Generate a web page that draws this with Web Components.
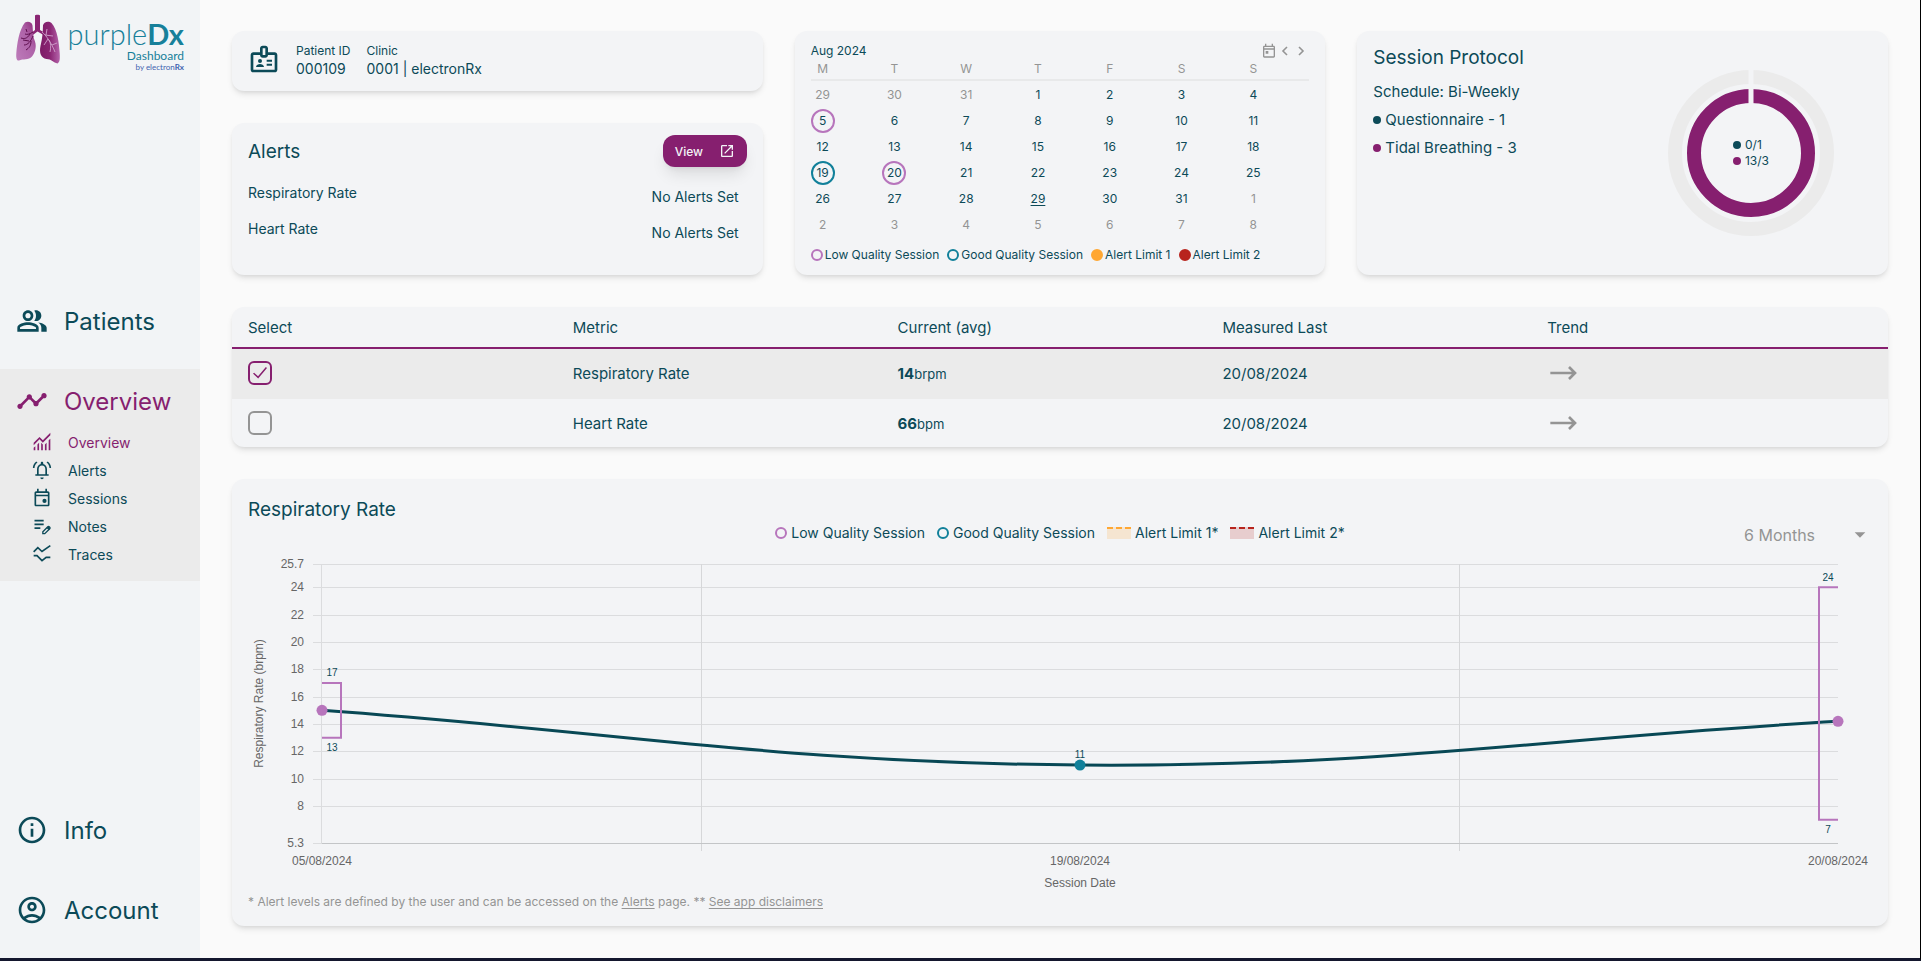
<!DOCTYPE html>
<html lang="en">
<head>
<meta charset="utf-8">
<title>purpleDx Dashboard</title>
<style>
  html, body { margin: 0; }
  body {
    --ink: #0c4a58; --purple: #861f6f; --low: #b775bc; --good: #11809a;
    --amber: #ffa733; --red: #b8241d; --muted: #949494; --panel: #f3f4f6; --fill: #ebebeb; --page: #fafafa;
    font-family: Inter, "Noto Sans", sans-serif; font-size: 14px; color: var(--ink); background: #fafafa;
  }
</style>
</head>
<body>
<dx-app></dx-app>
<script>
const define = (name, html, setup) => {
  const tpl = document.createElement('template');
  tpl.innerHTML = '<style>*{box-sizing:border-box}:host{display:block;box-sizing:border-box}</style>' + html;
  customElements.define(name, class extends HTMLElement {
    connectedCallback() {
      if (this.shadowRoot) return;
      this.attachShadow({ mode: 'open' }).append(tpl.content.cloneNode(true));
      if (setup) setup.call(this, this.shadowRoot);
    }
  });
};

const ICONS = {
  people: '<path d="M16.67 13.13C18.04 14.06 19 15.32 19 17v3h4v-3c0-2.18-3.57-3.47-6.33-3.87zM15 12c2.21 0 4-1.79 4-4s-1.79-4-4-4c-.47 0-.91.1-1.33.24C14.5 5.27 15 6.58 15 8s-.5 2.73-1.33 3.76c.42.14.86.24 1.33.24zM9 12c2.21 0 4-1.79 4-4s-1.79-4-4-4-4 1.79-4 4 1.79 4 4 4zm0-6c1.1 0 2 .9 2 2s-.9 2-2 2-2-.9-2-2 .9-2 2-2zM9 13c-2.67 0-8 1.34-8 4v3h16v-3c0-2.66-5.33-4-8-4zm6 5H3v-.99C3.2 16.29 6.3 15 9 15s5.8 1.29 6 2v1z"/>',
  timeline: '<path d="M23 8c0 1.1-.9 2-2 2-.18 0-.35-.02-.51-.07l-3.56 3.55c.05.16.07.34.07.52 0 1.1-.9 2-2 2s-2-.9-2-2c0-.18.02-.36.07-.52l-2.55-2.55c-.16.05-.34.07-.52.07s-.36-.02-.52-.07l-4.55 4.56c.05.16.07.33.07.51 0 1.1-.9 2-2 2s-2-.9-2-2 .9-2 2-2c.18 0 .35.02.51.07l4.56-4.55C8.02 9.36 8 9.18 8 9c0-1.1.9-2 2-2s2 .9 2 2c0 .18-.02.36-.07.52l2.55 2.55c.16-.05.34-.07.52-.07s.36.02.52.07l3.55-3.56C19.02 8.35 19 8.18 19 8c0-1.1.9-2 2-2s2 .9 2 2z"/>',
  info: '<path d="M11 7h2v2h-2zm0 4h2v6h-2zm1-9C6.48 2 2 6.48 2 12s4.48 10 10 10 10-4.48 10-10S17.52 2 12 2zm0 18c-4.41 0-8-3.59-8-8s3.59-8 8-8 8 3.59 8 8-3.59 8-8 8z"/>',
  account: '<path d="M12 2C6.48 2 2 6.48 2 12s4.48 10 10 10 10-4.48 10-10S17.52 2 12 2zM7.35 18.5C8.66 17.56 10.26 17 12 17s3.34.56 4.65 1.5C15.34 19.44 13.74 20 12 20s-3.34-.56-4.65-1.5zm10.79-1.38C16.45 15.8 14.32 15 12 15s-4.45.8-6.14 2.12C4.7 15.73 4 13.95 4 12c0-4.42 3.58-8 8-8s8 3.58 8 8c0 1.95-.7 3.73-1.86 5.12zM12 6c-1.93 0-3.5 1.57-3.5 3.5S10.07 13 12 13s3.5-1.57 3.5-3.5S13.93 6 12 6zm0 5c-.83 0-1.5-.67-1.5-1.5S11.17 8 12 8s1.5.67 1.5 1.5S12.83 11 12 11z"/>',
  monitoring: '<path d="M2 22v-3l2-2v5zM6.5 22v-7l2-2v9zM11 22v-9l2 2v7zM15.5 22v-7l2-2v9zM20 22V10l2-2v14zM2 15.8V13l7-7 4 4 9-9v2.8l-9 9-4-4z"/>',
  bell: '<path d="M12 23c1.1 0 2-.9 2-2h-4c0 1.1.9 2 2 2zm6-6v-6c0-3.07-1.63-5.64-4.5-6.32V3.5c0-.83-.67-1.500-1.500-1.500s-1.500.67-1.500 1.500v1.180C7.640 5.360 6 7.920 6 11v6H4v2h16v-2zm-2 0H8v-6c0-2.480 1.510-4.500 4-4.500s4 2.020 4 4.500zM6.580 3.080L5.150 1.650C2.750 3.480 1.170 6.300 1.030 9.500h2c.15-2.650 1.510-4.970 3.550-6.420zM20.970 9.500h2c-.15-3.200-1.730-6.020-4.120-7.850l-1.420 1.430c2.020 1.450 3.390 3.770 3.540 6.420z"/>',
  event: '<path d="M19 4h-1V1h-2v3H8V1H6v3H5c-1.11 0-2 .9-2 2v14c0 1.1.89 2 2 2h14c1.1 0 2-.9 2-2V6c0-1.1-.9-2-2-2zm0 16H5V10h14v10zm0-12H5V6h14v2z"/><circle cx="15" cy="15.5" r="2.5"/>',
  today: '<path d="M19 4h-1V1h-2v3H8V1H6v3H5c-1.11 0-2 .9-2 2v14c0 1.1.89 2 2 2h14c1.1 0 2-.9 2-2V6c0-1.1-.9-2-2-2zm0 16H5V10h14v10zm0-12H5V6h14v2zM7 12h4v4H7z"/>',
  note: '<path d="M3 9h11v2H3zM3 4.5h11v2H3zM3 13.5h7v2H3z"/><path d="M13 21.2v-2.3l6-6c1.2-1.2 3.5 1 2.3 2.3l-6 6z" fill="none" stroke="currentColor" stroke-width="1.6"/><path d="M17.500 14.5l2.7 2.7 2-2.2-2.7-2.6z"/>',
  traces: '<path d="M2 9.5l5-5 5 4.5 10-7M2 14h4l6 6 5-4h5" fill="none" stroke="currentColor" stroke-width="2"/>',
  badge: '<path d="M20 7h-5V4c0-1.1-.9-2-2-2h-2c-1.1 0-2 .9-2 2v3H4c-1.1 0-2 .9-2 2v11c0 1.1.9 2 2 2h16c1.1 0 2-.9 2-2V9c0-1.1-.9-2-2-2zm-9-3h2v5h-2V4zm9 16H4V9h5c0 1.1.9 2 2 2h2c1.1 0 2-.9 2-2h5v11z"/><circle cx="9" cy="13.5" r="1.5"/><path d="M6 18c0-1.5 1.8-2.2 3-2.2s3 .7 3 2.2zM14 12.5h4V14h-4zM14 15.5h4V17h-4z"/>',
  open: '<path d="M19 19H5V5h7V3H5c-1.11 0-2 .9-2 2v14c0 1.1.89 2 2 2h14c1.1 0 2-.9 2-2v-7h-2v7zM14 3v2h3.59l-9.83 9.83 1.41 1.41L19 6.41V10h2V3h-7z"/>',
  left: '<path d="M15 6l-6 6 6 6" fill="none" stroke="currentColor" stroke-width="2.4"/>',
  right: '<path d="M9 6l6 6-6 6" fill="none" stroke="currentColor" stroke-width="2.4"/>',
  flat: '<path d="M2.500 12H21M16.500 7.500L21 12l-4.500 4.500" fill="none" stroke="currentColor" stroke-width="2"/>',
  drop: '<path d="M4 8h16l-8 8z"/>'
};
define('dx-icon', '<style>:host{flex:none;width:var(--size,24px);height:var(--size,24px)}svg{display:block;width:100%;height:100%;fill:currentColor}</style><svg viewBox="0 0 24 24" aria-hidden="true"></svg>',
  function (root) { root.querySelector('svg').innerHTML = ICONS[this.getAttribute('name')]; });

define('dx-logo', `
<style>
  :host { height: 72px; padding: 14px 16px 0; color: #17809a; font-family: Lato, sans-serif; }
  a { display: flex; gap: 6px; color: inherit; text-decoration: none; }
  svg { flex: none; width: 44px; height: 51px; }
  .words { width: 118px; text-align: right; white-space: nowrap; padding-top: 4px; }
  b { font-weight: 700; }
  .name { font-size: 29px; line-height: 32px; font-weight: 300; }
  .sub { font-size: 12px; line-height: 12px; font-weight: 400; }
  .by { font-size: 8px; line-height: 10px; color: #3d63b0; }
</style>
<a href="#home">
<svg viewBox="0 0 44 51" aria-hidden="true">
  <defs>
    <linearGradient id="l" x1="0" y1="1" x2="1" y2="0"><stop offset="0" stop-color="#bd7cba"/><stop offset=".6" stop-color="#ae62a8"/><stop offset="1" stop-color="#8a2573"/></linearGradient>
    <linearGradient id="r" x1="1" y1="0" x2="0" y2="0"><stop offset="0" stop-color="#b565ab"/><stop offset=".5" stop-color="#8a2573"/><stop offset="1" stop-color="#7d1b66"/></linearGradient>
  </defs>
  <path fill="#8a2573" d="M19 1.5c0-1 5-1 5 0V16l5 3-1.5 2-6-3.5-6 4.5-1.5-2 5-4z"/>
  <path fill="url(#l)" d="M9 8.5c3-1.5 7-.5 7.5 3 .5 6 .5 12 2.5 16 2 6-.5 12-3 15C12.5 46.5 7 44.5 3 46.5c-2.5.5-3-3-2.7-7C1 30 3 16 9 8.5z"/>
  <path fill="url(#r)" d="M27 11.5c.5-4 6-5 8.5-2.5 6 6.5 7.5 20 8.2 30 .3 6 .3 9-2.2 10.500-4-1-6-4.500-11-4.500-5.500-1-7.500-6-6-13 2-8 2.300-14 2.500-20.500z"/>
  <path fill="none" stroke="#5e0f4e" d="M17 18c-3 2-6 3-8 2M14 20c-3 5-6 5-9 4M17 22c-2 5-5 9-9 9M13 27l-6-1M15 27c0 5-2 7-5 9M11 18l-1-3"/>
  <path fill="none" stroke="#cfa0cc" stroke-width=".9" d="M26 18c4 3 10 12 13 20M29 21l8 1M30 21l1-6M33 26c2 3 2 8 1 12M32 25l-4 6M36 31l5-2"/>
</svg>
<div class="words"><div class="name">purple<b>Dx</b></div><div class="sub">Dashboard</div><div class="by">by electron<b>Rx</b></div></div>
</a>`);

define('dx-nav-item', `
<style>
  a { display: flex; align-items: center; gap: 16px; height: 64px; padding: 0 16px; font-size: 24px; color: inherit; text-decoration: none; --size: 32px; }
  :host([active]) a { color: var(--purple); }
  :host([sub]) a { height: 28px; padding: 0 32px; font-size: 14px; --size: 20px; }
</style>
<a><slot></slot></a>`,
  function (root) {
    const link = root.querySelector('a'), icon = document.createElement('dx-icon');
    icon.setAttribute('name', this.getAttribute('icon'));
    link.href = '#' + this.textContent.toLowerCase();
    link.prepend(icon);
  });

define('dx-sidebar', `
<style>
  :host { background: #f2f4f6; display: flex; flex-direction: column; justify-content: space-between; padding-bottom: 16px; }
  .main, .foot { display: grid; gap: 16px; }
  .group { background: var(--fill); padding-bottom: 13px; }
  .group > :first-child { margin-bottom: -5px; }
</style>
<dx-logo></dx-logo>
<nav class="main" aria-label="Main">
  <dx-nav-item icon="people">Patients</dx-nav-item>
  <div class="group">
    <dx-nav-item icon="timeline" active>Overview</dx-nav-item>
    <dx-nav-item icon="monitoring" sub active>Overview</dx-nav-item>
    <dx-nav-item icon="bell" sub>Alerts</dx-nav-item>
    <dx-nav-item icon="event" sub>Sessions</dx-nav-item>
    <dx-nav-item icon="note" sub>Notes</dx-nav-item>
    <dx-nav-item icon="traces" sub>Traces</dx-nav-item>
  </div>
</nav>
<nav class="foot" aria-label="Account">
  <dx-nav-item icon="info">Info</dx-nav-item>
  <dx-nav-item icon="account">Account</dx-nav-item>
</nav>`);

define('dx-card', `
<style>
  :host { background: var(--panel); border-radius: 12px; box-shadow: 0 4px 6px -1px rgba(0,0,0,.1), 0 2px 4px -2px rgba(0,0,0,.1); overflow: hidden; padding: var(--pad, 16px); }
</style><slot></slot>`);

define('dx-patient', `
<style>
  dx-card { --pad: 12px 16px; height: 60px; }
  .row { display: flex; gap: 16px; --size: 32px; }
  dl { margin: 0; display: flex; gap: 16px; }
  dt { font-size: 12px; line-height: 16px; }
  dd { margin: 0; font-size: 14px; line-height: 20px; }
</style>
<dx-card><div class="row"><dx-icon name="badge"></dx-icon>
<dl><div><dt>Patient ID</dt><dd>000109</dd></div><div><dt>Clinic</dt><dd>0001 | electronRx</dd></div></dl></div></dx-card>`);

define('dx-alerts', `
<style>
  dx-card { --pad: 12px 16px; height: 152px; }
  header { display: flex; justify-content: space-between; align-items: center; height: 32px; }
  h2 { margin: 0; font-size: 19px; font-weight: 400; }
  button { width: 84px; height: 32px; padding: 0 12px; border: 0; border-radius: 12px; background: var(--purple); color: #f3f4f6; font: 500 12px Inter, sans-serif; display: flex; align-items: center; justify-content: space-between; --size: 16px; box-shadow: 0 10px 15px -3px rgba(0,0,0,.1), 0 4px 6px -4px rgba(0,0,0,.1); }
  dl { margin: 8px 0 0; }
  dl div { display: flex; justify-content: space-between; height: 36px; }
  dt { line-height: 36px; }
  dd { margin: 0; padding: 8px 8px 0 0; line-height: 28px; }
</style>
<dx-card>
  <header><h2>Alerts</h2><button type="button">View <dx-icon name="open"></dx-icon></button></header>
  <dl><div><dt>Respiratory Rate</dt><dd>No Alerts Set</dd></div><div><dt>Heart Rate</dt><dd>No Alerts Set</dd></div></dl>
</dx-card>`);

define('dx-calendar', `
<style>
  :host { font-size: 12px; }
  dx-card { --pad: 12px 16px; height: 100%; }
  header { display: flex; align-items: center; height: 16px; }
  h2 { margin: 0 auto 0 0; font-size: 12px; line-height: 14px; font-weight: 400; }
  button { padding: 0; border: 0; background: none; color: var(--muted); --size: 16px; }
  table { width: 100%; border-collapse: collapse; table-layout: fixed; }
  th, td { padding: 0; text-align: left; font-weight: 400; height: 26px; }
  th { height: 20px; color: var(--muted); border-bottom: 2px solid #e8e9ea; }
  th:last-child { width: 68px; }
  tbody::before { content: ""; display: block; height: 1px; }
  span { display: block; width: 24px; line-height: 20px; text-align: center; border: 2px solid transparent; border-radius: 50%; }
  th span { border: 0; }
  .out { color: var(--muted); }
  .low { border-color: var(--low); } .good { border-color: var(--good); }
  .today { text-decoration: underline; text-underline-offset: 2px; }
  ul { display: flex; flex-wrap: wrap; gap: 8px; margin: 9px 0 0; padding: 0; list-style: none; line-height: 16px; }
  li { display: flex; align-items: center; gap: 2px; }
  i { width: 12px; height: 12px; border-radius: 50%; border: 2px solid var(--c); background: var(--b); }
</style>
<dx-card>
  <header><h2>Aug 2024</h2>
    <button type="button" aria-label="Today"><dx-icon name="today"></dx-icon></button>
    <button type="button" aria-label="Previous month"><dx-icon name="left"></dx-icon></button>
    <button type="button" aria-label="Next month"><dx-icon name="right"></dx-icon></button>
  </header>
  <table><thead><tr></tr></thead><tbody></tbody></table>
  <ul>
    <li><i style="--c:var(--low)"></i>Low Quality Session</li>
    <li><i style="--c:var(--good)"></i>Good Quality Session</li>
    <li><i style="--c:var(--amber);--b:var(--amber)"></i>Alert Limit 1</li>
    <li><i style="--c:var(--red);--b:var(--red)"></i>Alert Limit 2</li>
  </ul>
</dx-card>`, function (root) {
  root.querySelector('thead tr').innerHTML = [...'MTWTFSS'].map(d => `<th scope="col"><span>${d}</span></th>`).join('');
  const marks = { '8-5': 'low', '8-19': 'good', '8-20': 'low', '8-29': 'today' };
  let html = '';
  for (let w = 0; w < 6; w++) {
    html += '<tr>';
    for (let d = 0; d < 7; d++) {
      const date = new Date(2024, 6, 29 + w * 7 + d), m = date.getMonth() + 1, n = date.getDate();
      html += `<td><span class="${m === 8 ? marks[m + '-' + n] || '' : 'out'}">${n}</span></td>`;
    }
    html += '</tr>';
  }
  root.querySelector('tbody').innerHTML = html;
});

define('dx-protocol', `
<style>
  dx-card { --pad: 11px 16px; height: 100%; }
  .row { display: flex; justify-content: space-between; }
  h2 { margin: 0 0 4px; font-size: 19px; line-height: 32px; font-weight: 400; }
  p, li { margin: 0; font-size: 15px; line-height: 28px; }
  ul { margin: 0; padding: 0; list-style: none; }
  li { display: flex; align-items: center; gap: 4px; }
  i { width: 8px; height: 8px; border-radius: 50%; background: var(--c); }
  .donut { display: grid; place-items: center; width: 166px; height: 166px; margin: 28px 38px 0 0; }
  .donut > * { grid-area: 1 / 1; }
  svg { width: 100%; height: 100%; }
  circle { fill: none; stroke-width: 14; }
  .donut li { font-size: 12px; line-height: 16px; }
</style>
<dx-card><div class="row">
  <div><h2>Session Protocol</h2><p>Schedule: Bi-Weekly</p>
    <ul><li><i style="--c:var(--ink)"></i>Questionnaire - 1</li><li><i style="--c:var(--purple)"></i>Tidal Breathing - 3</li></ul></div>
  <div class="donut">
    <svg viewBox="0 0 166 166" aria-hidden="true"><circle cx="83" cy="83" r="76" stroke="#ebebeb"/><circle cx="83" cy="83" r="57" stroke="#861f6f"/><path d="M83 0v36" stroke="#f3f4f6" stroke-width="5"/></svg>
    <ul><li><i style="--c:var(--ink)"></i>0/1</li><li><i style="--c:var(--purple)"></i>13/3</li></ul>
  </div>
</div></dx-card>`);

define('dx-metrics', `
<style>
  dx-card { --pad: 0; }
  table, thead, tbody { display: block; }
  tr { display: grid; grid-template-columns: repeat(5, 1fr); align-items: center; padding: 0 16px; height: 50px; border-bottom: 2px solid transparent; }
  thead tr { height: 42px; border-color: var(--purple); }
  tbody tr:last-child { height: 48px; border: 0; }
  th, td { padding: 0; text-align: left; font-size: 15px; font-weight: 400; }
  td { display: flex; align-items: center; }
  .on { background: var(--fill); }
  p { margin: 0; } b { font-weight: 700; } small { font-size: 13px; }
  input { appearance: none; margin: 0; width: 24px; height: 24px; border: 2px solid #949494; border-radius: 6px; display: grid; place-items: center; }
  input:checked { border-color: var(--purple); }
  input:checked::before { content: ""; width: 14px; height: 12px; background: var(--purple); clip-path: polygon(0 55%, 8% 47%, 36% 78%, 92% 0, 100% 8%, 37% 96%); }
  dx-icon { --size: 32px; color: var(--muted); }
</style>
<dx-card><table>
<thead><tr><th scope="col">Select</th><th scope="col">Metric</th><th scope="col">Current (avg)</th><th scope="col">Measured Last</th><th scope="col">Trend</th></tr></thead>
<tbody>
<tr class="on"><td><input type="checkbox" id="rr" aria-labelledby="rrl" checked></td><td><label id="rrl" for="rr">Respiratory Rate</label></td><td><p><b>14</b><small>brpm</small></p></td><td>20/08/2024</td><td><dx-icon name="flat"></dx-icon></td></tr>
<tr><td><input type="checkbox" id="hr" aria-labelledby="hrl"></td><td><label id="hrl" for="hr">Heart Rate</label></td><td><p><b>66</b><small>bpm</small></p></td><td>20/08/2024</td><td><dx-icon name="flat"></dx-icon></td></tr>
</tbody></table></dx-card>`);

define('dx-line-chart', `
<style>
  :host { height: 349px; margin-top: 2px; }
  svg { display: block; width: 100%; height: 100%; overflow: visible; font: 12px "Liberation Sans", Arial, sans-serif; fill: #666; }
  .tag { font-size: 10px; fill: var(--ink); }
  .grid { stroke: #dbdcde; fill: none; } .quarter { stroke: #d6d7d9; } .base { stroke: #c3c5c7; }
  .line { stroke: #084855; stroke-width: 3; fill: none; }
  .range { stroke: var(--low); stroke-width: 2; fill: none; }
</style><svg role="img" aria-label="Respiratory rate by session date"></svg>`, function (root) {
  const svg = root.querySelector('svg');
  const draw = () => {
    const w = this.clientWidth, L = 74, R = w - 34, T = 19, B = 298, M = (L + R) / 2;
    const y = v => B - (v - 5.3) * (B - T) / 20.4, px = v => Math.round(v) + .5;
    let s = '';
    for (const v of [25.7, 24, 22, 20, 18, 16, 14, 12, 10, 8, 5.3]) {
      s += `<path class="grid" d="M${L - 9} ${px(y(v))}H${R}"/><text text-anchor="end" x="${L - 18}" y="${Math.round(y(v)) + 4}">${v}</text>`;
    }
    s += `<path class="grid" d="M${L - .5} ${T}V${B}"/>`;
    for (const q of [.25, .75]) s += `<path class="quarter" d="M${px(L + (R - L) * q - .5)} ${T}v${B - T + 8}"/>`;
    s += `<path class="base" d="M${L} ${B + .5}H${R}"/>`;
    const p = [[L, y(15)], [M, y(11)], [R, y(14.2)]];
    const cp = (a, b, t) => `${a[0] + t * (b[0] - a[0])} ${a[1] + t * (b[1] - a[1])}`;
    const dx = .2 * (p[2][0] - p[0][0]), dy = .2 * (p[2][1] - p[0][1]);
    s += `<path class="line" d="M${p[0]}C${cp(p[0], p[1], .4)} ${p[1][0] - dx} ${p[1][1] - dy} ${p[1]}C${p[1][0] + dx} ${p[1][1] + dy} ${cp(p[2], p[1], .4)} ${p[2]}"/>`;
    s += `<path class="range" d="M${L} ${y(17)}h19V${y(13)}h-19M${R} ${y(24)}h-19V${y(7)}h19"/>`;
    s += p.map((q, i) => `<circle cx="${q[0]}" cy="${q[1]}" r="5.5" fill="var(--${i === 1 ? 'good' : 'low'})"/>`).join('');
    for (const [x, ty, t] of [[L + 10, 131, 17], [L + 10, 206, 13], [M, 213, 11], [R - 10, 36, 24], [R - 10, 288, 7]])
      s += `<text class="tag" text-anchor="middle" x="${x}" y="${ty}">${t}</text>`;
    [[L, '05/08/2024'], [M, '19/08/2024'], [R, '20/08/2024']].forEach(([x, t]) => { s += `<text text-anchor="middle" x="${x}" y="320">${t}</text>`; });
    s += `<text text-anchor="middle" x="${M}" y="342">Session Date</text>`;
    s += `<text text-anchor="middle" transform="translate(15 ${(T + B) / 2}) rotate(-90)">Respiratory Rate (brpm)</text>`;
    svg.innerHTML = s;
  };
  draw();
  new ResizeObserver(draw).observe(this);
});

define('dx-trend', `
<style>
  h2 { margin: 0; padding-top: 2px; font-size: 19px; line-height: 26px; font-weight: 400; }
  .bar { display: grid; grid-template-columns: 1fr auto 1fr; align-items: start; height: 20px; }
  ul { grid-column: 2; display: flex; gap: 12px; margin: 0; padding: 0; list-style: none; line-height: 20px; }
  li { display: flex; align-items: center; gap: 4px; }
  i { width: 12px; height: 12px; border: 2px solid var(--c); border-radius: 50%; }
  .limit { width: 24px; border: 0; border-radius: 0; background: repeating-linear-gradient(90deg, var(--c) 0 6px, transparent 6px 9px) 0 0 / 100% 2px no-repeat, var(--b); }
  .pick { justify-self: end; display: flex; align-items: center; color: var(--muted); padding: 2px 4px 0 0; }
  select { appearance: none; border: 0; padding: 0; background: none; width: 108px; font: 16px Inter, sans-serif; color: var(--muted); }
  dx-icon { --size: 16px; pointer-events: none; }
  p { margin: 0; font-size: 12px; line-height: 16px; color: var(--muted); }
  a { color: inherit; text-underline-offset: 2px; }
</style>
<dx-card>
  <h2>Respiratory Rate</h2>
  <div class="bar">
    <ul>
      <li><i style="--c:var(--low)"></i>Low Quality Session</li>
      <li><i style="--c:var(--good)"></i>Good Quality Session</li>
      <li><i class="limit" style="--c:var(--amber);--b:#f5e5d1"></i>Alert Limit 1*</li>
      <li><i class="limit" style="--c:var(--red);--b:#e7cdce"></i>Alert Limit 2*</li>
    </ul>
    <div class="pick"><select aria-label="Period"><option>6 Months</option></select><dx-icon name="drop"></dx-icon></div>
  </div>
  <dx-line-chart></dx-line-chart>
  <p>* Alert levels are defined by the user and can be accessed on the <a href="#alerts">Alerts</a> page. ** <a href="#disclaimers">See app disclaimers</a></p>
</dx-card>`);

define('dx-app', `
<style>
  :host { display: grid; grid-template-columns: 200px minmax(0, 1fr); min-height: 100vh; background: var(--page); border-right: 1px solid #000; border-bottom: 3px solid #14172e; }
  main { display: grid; align-content: start; gap: 32px; padding: 31px 32px 32px; }
  .top { display: grid; grid-template-columns: repeat(3, minmax(0, 1fr)); gap: 32px; }
  .stack { display: grid; gap: 32px; align-content: start; }
</style>
<dx-sidebar></dx-sidebar>
<main>
  <div class="top">
    <div class="stack"><dx-patient></dx-patient><dx-alerts></dx-alerts></div>
    <dx-calendar></dx-calendar>
    <dx-protocol></dx-protocol>
  </div>
  <dx-metrics></dx-metrics>
  <dx-trend></dx-trend>
</main>`);
</script>
</body>
</html>
